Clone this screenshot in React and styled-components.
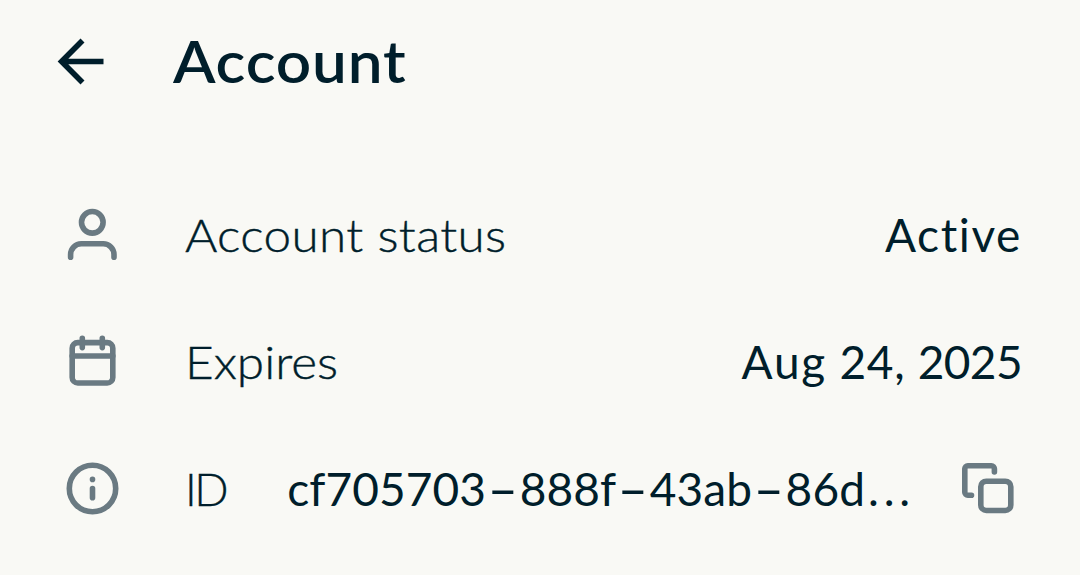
import styled, { createGlobalStyle } from "styled-components";

const ID_GROUPS = ["cf705703", "888f", "43ab", "86d"];

const App = () => {
  return (
    <Screen>
      <GlobalStyle />
      <Header>
        <BackButton aria-label="Back">
          <Icon viewBox="0 0 60 60">
            <path d="M31.5 9.5 L10.6 30.5 L31.5 51.5 M10.6 30.5 H52.5" />
          </Icon>
        </BackButton>
        <Title>Account</Title>
      </Header>
      <List>
        <Row>
          <Icon viewBox="0 0 60 60" $muted>
            <circle cx="30.3" cy="17.3" r="10.8" />
            <path d="M8.6 52.2 V49.5 A10.7 10.7 0 0 1 19.3 38.8 H41.3 A10.7 10.7 0 0 1 52 49.5 V52.2" />
          </Icon>
          <Label $spacing="0.35px" $stretch={1.075}>
            Account status
          </Label>
          <Value $spacing="1.6px">Active</Value>
        </Row>
        <Row>
          <Icon viewBox="0 0 60 60" $muted>
            <rect x="10.2" y="10.6" width="40.6" height="40.4" rx="5.6" />
            <path d="M10.2 24 H50.8 M20.3 6.2 V15.6 M40.3 6.2 V15.6" />
          </Icon>
          <Label $spacing="0px" $stretch={1.075}>
            Expires
          </Label>
          <Value $spacing="0.65px">
            <Month>Aug</Month> 24, <Year>2025</Year>
          </Value>
        </Row>
        <Row>
          <Icon viewBox="0 0 60 60" $muted>
            <circle cx="30.5" cy="29.5" r="23.2" />
            <path d="M30.5 20.3 V20.4 M30.5 29.5 V38.8" />
          </Icon>
          <Label $spacing="-2.5px" $stretch={0.98}>
            ID
          </Label>
          <Value $spacing="0.1px">
            {ID_GROUPS.map((group, index) => (
              <span key={group}>
                {index > 0 && <Dash>-</Dash>}
                {group}
              </span>
            ))}
            <Dots>...</Dots>
          </Value>
          <CopyButton aria-label="Copy ID">
            <Icon viewBox="0 0 60 60" $muted>
              <path d="M34.4 13 V9.8 A3 3 0 0 0 31.4 6.8 H7.8 A3 3 0 0 0 4.8 9.8 V33.2 A3 3 0 0 0 7.8 36.2 H11.5" />
              <rect x="20.8" y="22.2" width="30" height="29.3" rx="5.5" />
            </Icon>
          </CopyButton>
        </Row>
      </List>
    </Screen>
  );
};

const GlobalStyle = createGlobalStyle`
  body {
    margin: 0;
    background-color: #f9f9f5;
  }
`;
const Screen = styled.main`
  display: flex;
  flex-direction: column;
  gap: 49.5px;
  width: 1080px;
  height: 575px;
  overflow: hidden;
  background-color: #f9f9f5;
  color: #001e2b;
  font-family: "Lato", sans-serif;
`;
const Header = styled.header`
  display: flex;
  align-items: center;
  height: 122px;
  padding-left: 51px;
  gap: 62px;
`;
const BackButton = styled.button`
  display: flex;
  padding: 0;
  border: none;
  background: none;
  color: inherit;
`;
const CopyButton = styled(BackButton)`
  margin-left: 47px;
`;
const Title = styled.h1`
  margin: 0 0 2px;
  font-size: 58px;
  font-weight: 600;
  letter-spacing: 0.8px;
  transform: scaleX(1.07);
  transform-origin: left;
`;
const List = styled.div`
  display: flex;
  flex-direction: column;
`;
const Row = styled.div`
  display: flex;
  align-items: center;
  height: 127px;
  padding: 0 60px 0 62px;
`;
const Icon = styled.svg`
  flex: none;
  width: 60px;
  height: 60px;
  fill: none;
  stroke: ${(props) => (props.$muted ? "#6a7a82" : "currentColor")};
  stroke-width: 5.6px;
  stroke-linecap: ${(props) => (props.$muted ? "round" : "butt")};
`;
const Text = styled.span`
  padding-bottom: 1px;
  font-size: 46px;
  letter-spacing: ${(props) => props.$spacing};
  white-space: nowrap;
`;
const Label = styled(Text)`
  margin-left: 62.5px;
  font-weight: 300;
  -webkit-text-stroke: 0.4px currentColor;
  transform: scaleX(${(props) => props.$stretch});
  transform-origin: left;
`;
const Value = styled(Text)`
  margin-left: auto;
  margin-right: -2px;
  font-weight: 400;
`;
const Month = styled.span`
  letter-spacing: 1.8px;
`;
const Year = styled.span`
  letter-spacing: -0.6px;
`;
const Dash = styled.span`
  display: inline-block;
  width: 33.5px;
  text-align: center;
  letter-spacing: 0;
  transform: scaleX(1.85);
`;
const Dots = styled.span`
  margin-left: 3px;
  letter-spacing: 4.8px;
`;

export default App;
